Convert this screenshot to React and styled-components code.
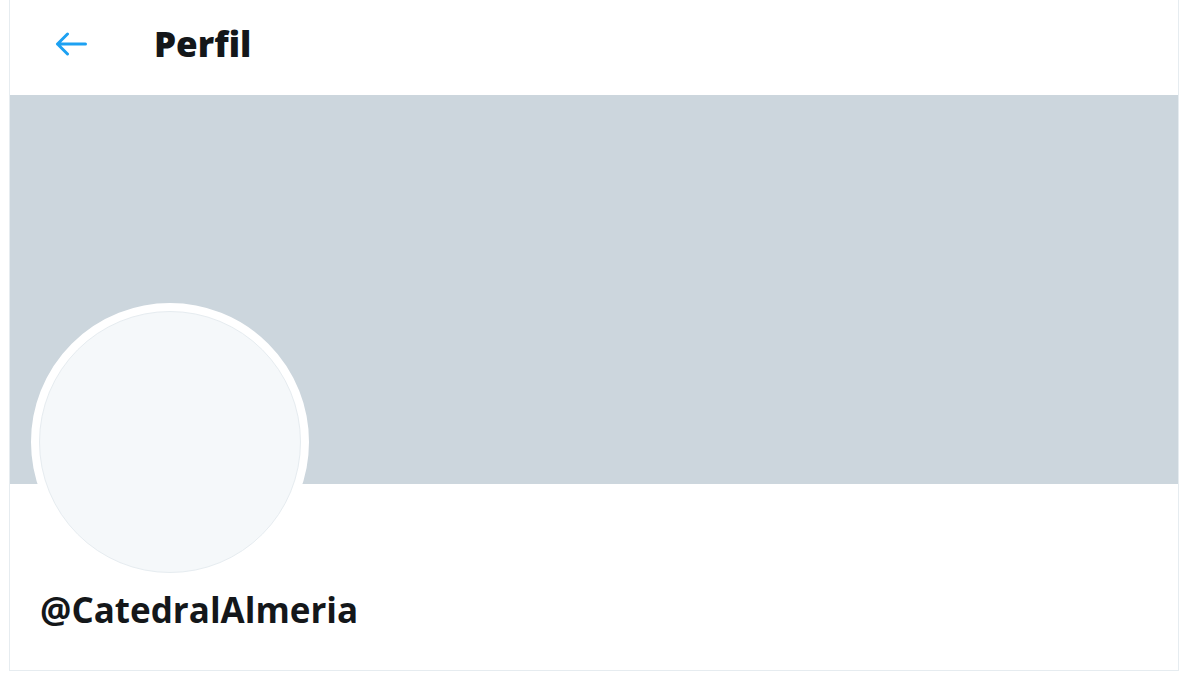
import React from "react";
import styled, { createGlobalStyle } from "styled-components";

const Global = createGlobalStyle`
  body {
    margin: 0;
    background: #ffffff;
    font-family: "Open Sans", "Noto Sans", sans-serif;
  }
`;

const Column = styled.main`
  margin-left: 9px;
  width: 1168px;
  border-left: 1px solid #e6ecf0;
  border-right: 1px solid #e6ecf0;
  border-bottom: 1px solid #e6ecf0;
  background: #fff;
`;

const Header = styled.header`
  height: 95px;
  display: flex;
  align-items: center;
  padding: 0 0 8px 44px;
  box-sizing: border-box;
  gap: 66px;
`;

const BackButton = styled.button`
  display: grid;
  place-items: center;
  width: 34px;
  height: 34px;
  padding: 0;
  border: none;
  background: transparent;
  color: #1da1f2;
  cursor: pointer;
`;

const Title = styled.h1`
  margin: 0;
  font-family: "Open Sans", "Noto Sans", sans-serif;
  font-weight: 800;
  font-size: 35px;
  color: #14171a;
`;

const Banner = styled.div`
  height: 389px;
  background: #ccd6dd;
`;

const Info = styled.section`
  padding: 0 0 36px 21px;
`;

const Avatar = styled.div`
  width: 262px;
  height: 262px;
  margin-top: -181px;
  border-radius: 50%;
  border: 8px solid #ffffff;
  background: #ffffff;
  display: grid;
  place-items: center;
`;

const AvatarFill = styled.div`
  width: 100%;
  height: 100%;
  box-sizing: border-box;
  border-radius: 50%;
  background: #f5f8fa;
  border: 1px solid #e6ecf0;
`;

const Handle = styled.div`
  margin: 5px 0 0 9px;
  font-family: "Open Sans", "Noto Sans", sans-serif;
  font-weight: 700;
  font-size: 35px;
  line-height: 48px;
  color: #14171a;
`;

export default function App() {
  return (
    <>
      <Global />
      <Column>
        <Header>
          <BackButton aria-label="Atrás">
            <svg width="32" height="24" viewBox="0 0 32 24" fill="none" stroke="currentColor" strokeWidth="3" strokeLinecap="round" strokeLinejoin="round">
              <path d="M30.5 12H2.5M12.5 2L2.5 12l10 10" />
            </svg>
          </BackButton>
          <Title>Perfil</Title>
        </Header>
        <Banner />
        <Info>
          <Avatar>
            <AvatarFill />
          </Avatar>
          <Handle>@CatedralAlmeria</Handle>
        </Info>
      </Column>
    </>
  );
}
